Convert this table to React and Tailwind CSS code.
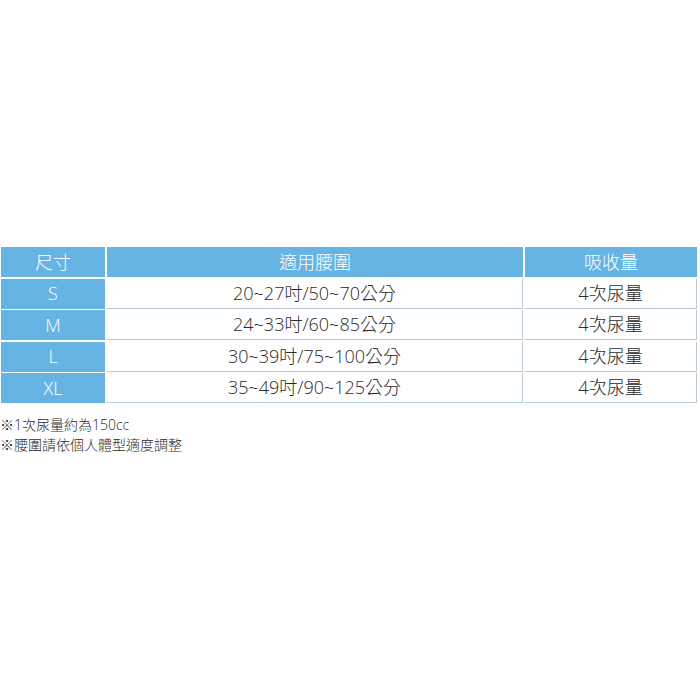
export default function App() {
  const rows = [
    ["S", "20~27吋/50~70公分", "4次尿量"],
    ["M", "24~33吋/60~85公分", "4次尿量"],
    ["L", "30~39吋/75~100公分", "4次尿量"],
    ["XL", "35~49吋/90~125公分", "4次尿量"],
  ];
  const font = { fontFamily: '"Open Sans", "Noto Sans CJK TC", sans-serif' };
  return (
    <div className="w-[700px] h-[700px] bg-white font-light" style={font}>
      <div className="pt-[247px] pl-[1px]">
        <div className="grid grid-cols-[104px_416px_172px] gap-x-[2px] gap-y-[1.5px] w-[696px]">
          <div className="h-[30px] bg-[#66b4e4] text-white text-[18px] flex items-center justify-center">尺寸</div>
          <div className="h-[30px] bg-[#66b4e4] text-white text-[18px] flex items-center justify-center">適用腰圍</div>
          <div className="h-[30px] bg-[#66b4e4] text-white text-[18px] flex items-center justify-center">吸收量</div>
          {rows.map((r) => (
            <>
              <div key={r[0] + "a"} className="h-[30px] bg-[#66b4e4] text-white text-[18px] flex items-center justify-center">{r[0]}</div>
              <div key={r[0] + "b"} className="h-[30px] bg-white text-[#2a2a2a] text-[18px] flex items-center justify-center border-r border-b border-[#b9cad6]">{r[1]}</div>
              <div key={r[0] + "c"} className="h-[30px] bg-white text-[#2a2a2a] text-[18px] flex items-center justify-center border-r border-b border-[#b9cad6]">{r[2]}</div>
            </>
          ))}
        </div>
        <div className="mt-[12px] -ml-[1px] text-[14px] leading-[20px] text-[#2a2a2a]">
          <div>※1次尿量約為150cc</div>
          <div>※腰圍請依個人體型適度調整</div>
        </div>
      </div>
    </div>
  );
}
